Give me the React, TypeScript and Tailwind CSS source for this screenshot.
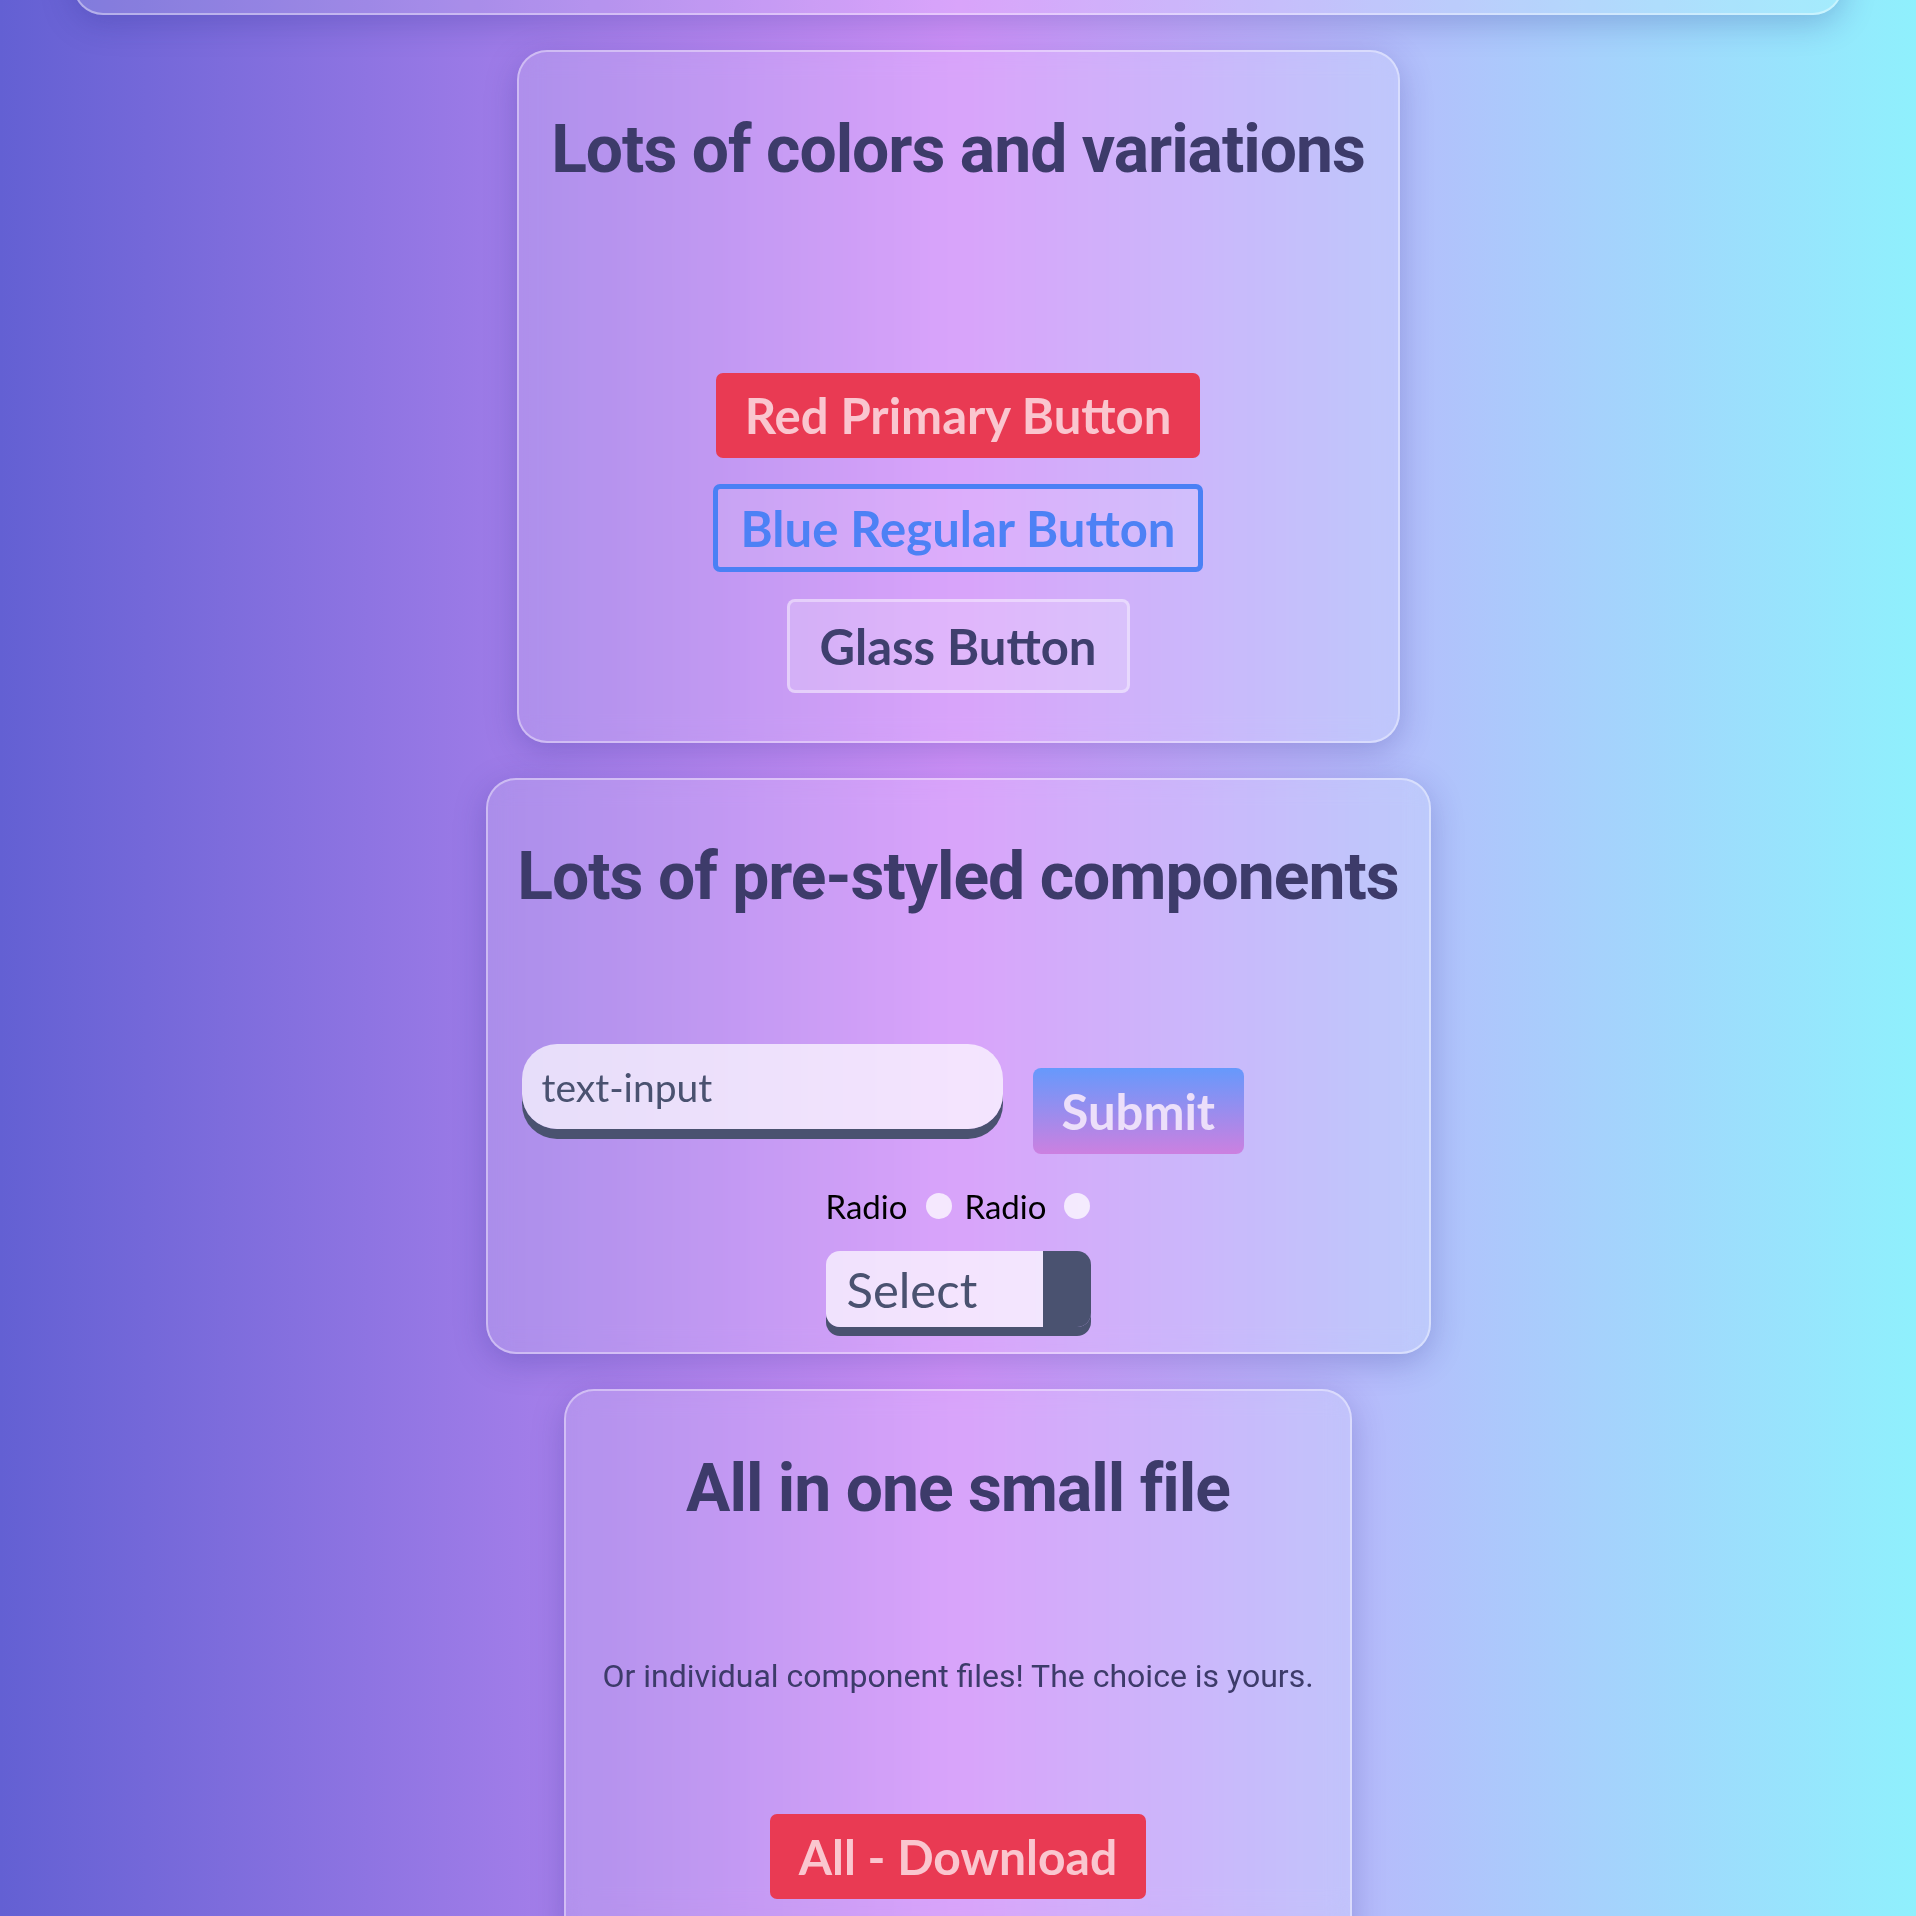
import React from "react";

function GlassCard({ className, children }: { className: string; children?: React.ReactNode }) {
  return (
    <div
      className={`flex flex-col items-center shrink-0 rounded-[30px] border-2 border-white/40 bg-white/15 px-[34px] shadow-[0_8px_32px_rgba(31,38,135,0.25)] backdrop-blur-md ${className}`}
    >
      {children}
    </div>
  );
}

function Title({ children }: { children: React.ReactNode }) {
  return (
    <h1 className="font-['Roboto',sans-serif] font-bold text-[66px] leading-none tracking-[-1px] text-[#3d3b6a] whitespace-nowrap">
      {children}
    </h1>
  );
}

export default function App() {
  return (
    <div className="min-h-screen bg-[linear-gradient(90deg,#6360d3,#d394fa,#8ff0fd)] flex flex-col items-center pb-12 font-['Lato',sans-serif] overflow-hidden">
      {/* Header card, mostly scrolled out of view */}
      <div className="w-[1770px] h-[100px] -mt-[85px] shrink-0 rounded-[30px] border-2 border-white/40 bg-white/15 shadow-[0_8px_32px_rgba(31,38,135,0.25)]" />

      {/* Colors and variations */}
      <GlassCard className="w-[883px] mt-[35px] pt-[65px] pb-[48px]">
        <Title>Lots of colors and variations</Title>
        <button className="mt-[190px] h-[85px] px-[29px] rounded-[7px] bg-[#e93a53] text-[#fac6cf] text-[49px] font-bold leading-none whitespace-nowrap">
          Red Primary Button
        </button>
        <button className="mt-[26px] h-[88px] px-[23px] rounded-[7px] border-[5px] border-[#4a80f5] bg-white/10 text-[#4d81f5] text-[49px] font-bold leading-none whitespace-nowrap">
          Blue Regular Button
        </button>
        <button className="mt-[27px] h-[94px] px-[30px] rounded-[8px] border-[3px] border-white/40 bg-white/20 text-[#3f3f6e] text-[49px] font-bold leading-none whitespace-nowrap">
          Glass Button
        </button>
      </GlassCard>

      {/* Pre-styled components */}
      <GlassCard className="w-[945px] mt-[35px] pt-[64px] pb-[25px]">
        <Title>Lots of pre-styled components</Title>
        <div className="self-start mt-[134px] flex items-start">
          <input
            type="text"
            placeholder="text-input"
            className="w-[481px] h-[85px] px-[20px] rounded-[35px] bg-white/70 text-[39px] text-[#4a5270] placeholder:text-[#4a5270] outline-none shadow-[0_10px_0_#4a5270]"
          />
          <button className="ml-[30px] mt-[24px] h-[86px] px-[29px] rounded-[8px] bg-[linear-gradient(180deg,#6699fc,#cc80e0)] text-[#ecdffa] text-[49px] font-bold leading-none">
            Submit
          </button>
        </div>
        <div className="mt-[36px] flex items-baseline text-[33px] leading-none text-black">
          <span>Radio</span>
          <span className="ml-[18px] w-[26px] h-[26px] rounded-full bg-white/75" />
          <span className="ml-[13px]">Radio</span>
          <span className="ml-[18px] w-[26px] h-[26px] rounded-full bg-white/75" />
        </div>
        <div className="mt-[28px] flex h-[76px] w-[265px] rounded-[14px] overflow-hidden shadow-[0_9px_0_#4a5270]">
          <div className="flex-1 flex items-center px-[21px] bg-white/70 text-[49px] leading-none text-[#4a5270]">
            Select
          </div>
          <div className="w-[48px] bg-[#4a5270]" />
        </div>
      </GlassCard>

      {/* Single file */}
      <GlassCard className="w-[788px] mt-[35px] pt-[65px] pb-[48px]">
        <Title>All in one small file</Title>
        <p className="mt-[138px] font-['Roboto',sans-serif] text-[32px] leading-none text-[#3d3b6a] whitespace-nowrap">
          Or individual component files! The choice is yours.
        </p>
        <button className="mt-[122px] h-[85px] px-[29px] rounded-[7px] bg-[#e93a53] text-[#fac6cf] text-[48px] font-bold leading-none whitespace-nowrap">
          All - Download
        </button>
      </GlassCard>
    </div>
  );
}
